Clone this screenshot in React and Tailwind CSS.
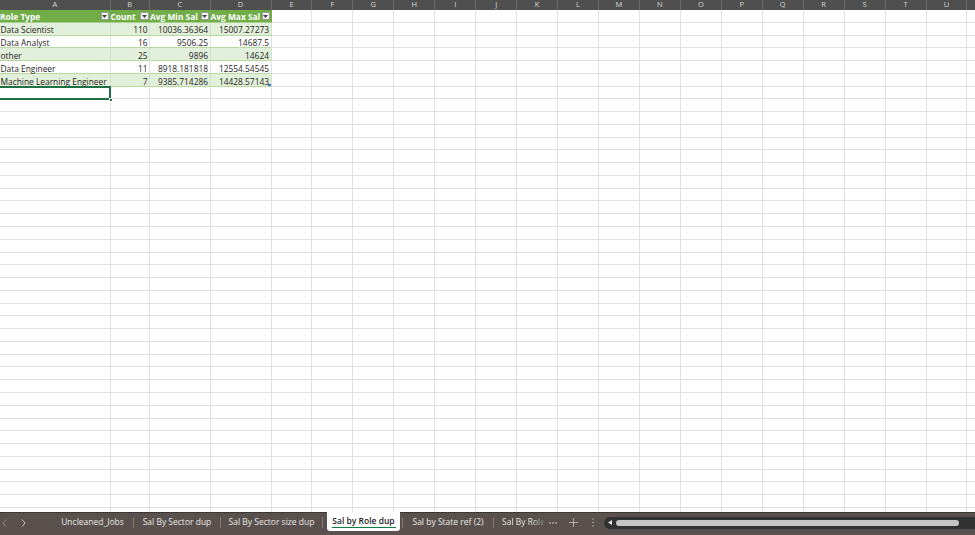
import React from "react";

const COLS = "grid grid-cols-[110.5px_39.5px_60.5px_61px_repeat(18,40.95px)]";
const LETTERS = ["A","B","C","D","E","F","G","H","I","J","K","L","M","N","O","P","Q","R","S","T","U","V"];

const DATA = [
  ["Data Scientist", "110", "10036.36364", "15007.27273"],
  ["Data Analyst", "16", "9506.25", "14687.5"],
  ["other", "25", "9896", "14624"],
  ["Data Engineer", "11", "8918.181818", "12554.54545"],
  ["Machine Learning Engineer", "7", "9385.714286", "14428.57143"],
];

function Drop() {
  return (
    <span className="flex h-[8px] w-[8.5px] shrink-0 items-center justify-center border border-[#9c9c9c] bg-[#f3f3f3]">
      <svg width="5" height="3" viewBox="0 0 5 3"><path d="M0 0 L5 0 L2.5 3 Z" fill="#444" /></svg>
    </span>
  );
}

function HeaderRow() {
  const heads = ["Role Type", "Count", "Avg Min Sal", "Avg Max Sal"];
  return (
    <div className={`${COLS} h-[12.78px] shrink-0`}>
      {LETTERS.map((l, i) =>
        i < 4 ? (
          <div key={l} className="flex items-center justify-between gap-[1px] border-b border-[#a9d08e] bg-[#70ad47] pr-[1.5px] pt-[1px] text-[8.4px] font-bold leading-none text-white">
            <span className="min-w-0 translate-y-[1px] whitespace-nowrap">{heads[i]}</span>
            <Drop />
          </div>
        ) : (
          <div key={l} className="border-b border-r border-[#e1e1e1]" />
        )
      )}
    </div>
  );
}

function DataRow({ row, idx }) {
  const band = idx % 2 === 0;
  return (
    <div className={`${COLS} h-[12.78px] shrink-0`}>
      {LETTERS.map((l, i) => {
        if (i < 4) {
          return (
            <div
              key={l}
              className={`flex items-center border-b border-r border-b-[#b7d8a0] ${band ? "bg-[#e2efda] border-r-[#d3e2c8]" : "bg-white border-r-[#e1e1e1]"} ${i === 0 ? "justify-start pl-[0.5px]" : "justify-end pr-[1.5px]"} whitespace-nowrap text-[8.4px] leading-none text-[#1e1e1e]`}
            >
              <span className="translate-y-[1.5px]">{row[i]}</span>
            </div>
          );
        }
        return <div key={l} className="border-b border-r border-[#e1e1e1]" />;
      })}
    </div>
  );
}

function EmptyRow() {
  return (
    <div className={`${COLS} h-[12.78px] shrink-0`}>
      {LETTERS.map((l) => (
        <div key={l} className="border-b border-r border-[#e1e1e1]" />
      ))}
    </div>
  );
}

function Sep() {
  return <div className="h-[11px] w-px shrink-0 bg-[#857d79]" />;
}

function Tab({ w, children }) {
  return (
    <div className={`${w} flex shrink-0 items-center justify-center whitespace-nowrap text-[8.5px] text-[#e8e6e5]`}>
      {children}
    </div>
  );
}

export default function App() {
  const empties = Array.from({ length: 34 });
  return (
    <div className="flex h-[535px] w-[975px] flex-col overflow-hidden bg-white font-['Open_Sans',sans-serif]">
      {/* column header */}
      <div className={`${COLS} h-[10px] shrink-0 overflow-hidden bg-[#4f4f4f]`}>
        {LETTERS.map((l) => (
          <div key={l} className="flex items-center justify-center border-r border-[#6a6a6a] text-[7.5px] font-medium leading-none text-[#d6d6d6]">
            {l === "V" ? "" : l}
          </div>
        ))}
      </div>

      {/* grid */}
      <div className="relative flex-1 overflow-hidden">
        <div className="flex flex-col">
          <HeaderRow />
          {DATA.map((r, i) => (
            <DataRow key={i} row={r} idx={i} />
          ))}
          {empties.map((_, i) => (
            <EmptyRow key={i} />
          ))}
        </div>
        {/* selection A7 */}
        <div className="absolute left-[-2px] top-[76.2px] h-[14px] w-[113px] border-2 border-[#1e7145]" />
        <div className="absolute left-[108.5px] top-[87.5px] h-[4px] w-[4px] border border-white bg-[#1e7145]" />
        {/* table resize handle */}
        <div className="absolute left-[268px] top-[74px] h-[2px] w-[3px] bg-[#4472c4]" />
      </div>

      {/* sheet tab bar */}
      <div className="h-[23px] shrink-0 border-t border-[#3d3836] bg-[#5a514e] pb-[3px]">
        <div className="flex h-full items-center font-['Open_Sans',sans-serif]">
          <div className="relative flex h-full w-[52px] shrink-0 items-center">
            <svg className="absolute left-[2px]" width="5" height="8" viewBox="0 0 5 8">
              <path d="M4 0.5 L1 4 L4 7.5" fill="none" stroke="#8f8885" strokeWidth="1" />
            </svg>
            <svg className="absolute left-[21px]" width="5" height="8" viewBox="0 0 5 8">
              <path d="M1 0.5 L4 4 L1 7.5" fill="none" stroke="#c9c4c2" strokeWidth="1" />
            </svg>
          </div>
          <Tab w="w-[81px]">Uncleaned_Jobs</Tab>
          <Sep />
          <Tab w="w-[86px]">Sal By Sector dup</Tab>
          <Sep />
          <Tab w="w-[101px]">Sal By Sector size dup</Tab>
          <Sep />
          <div className="w-[4px] shrink-0" />
          <div className="relative flex h-[19px] w-[73px] shrink-0 -translate-y-[1px] items-center justify-center rounded-b-[3px] bg-white text-[8.5px] font-semibold text-[#1f1f1f]">
            <span className="whitespace-nowrap">Sal by Role dup</span>
            <div className="absolute bottom-[3px] left-[5px] right-[4px] h-[1.5px] bg-[#107c41]" />
          </div>
          <div className="w-[2px] shrink-0" />
          <Sep />
          <Tab w="w-[90px]">Sal by State ref (2)</Tab>
          <Sep />
          <div className="flex w-[52px] shrink-0 items-center overflow-hidden whitespace-nowrap pl-[8px] text-[8.5px] text-[#e8e6e5] [mask-image:linear-gradient(to_right,black_75%,transparent)]">
            Sal By Role dup
          </div>
          <div className="flex w-[14px] shrink-0 items-center justify-center">
            <svg width="8" height="2" viewBox="0 0 8 2">
              <circle cx="1" cy="1" r="0.8" fill="#e0dcda" />
              <circle cx="4" cy="1" r="0.8" fill="#e0dcda" />
              <circle cx="7" cy="1" r="0.8" fill="#e0dcda" />
            </svg>
          </div>
          <div className="flex w-[26px] shrink-0 items-center justify-center">
            <svg width="9" height="9" viewBox="0 0 9 9">
              <path d="M4.5 0 V9 M0 4.5 H9" stroke="#bdb7b4" strokeWidth="0.9" />
            </svg>
          </div>
          <div className="flex w-[14px] shrink-0 items-center justify-center">
            <svg width="2" height="9" viewBox="0 0 2 9">
              <circle cx="1" cy="1" r="0.75" fill="#bdb7b4" />
              <circle cx="1" cy="4.5" r="0.75" fill="#bdb7b4" />
              <circle cx="1" cy="8" r="0.75" fill="#bdb7b4" />
            </svg>
          </div>
          <div className="w-[4px] shrink-0" />
          <div className="relative flex h-[12px] flex-1 items-center rounded-l-full bg-[#333232]">
            <svg className="ml-[4px] shrink-0" width="4" height="5" viewBox="0 0 4 5">
              <path d="M4 0 L0 2.5 L4 5 Z" fill="#e6e6e6" />
            </svg>
            <div className="ml-[4px] h-[6px] w-[343px] rounded-full bg-[#c6c6c6]" />
          </div>
        </div>
      </div>
    </div>
  );
}
